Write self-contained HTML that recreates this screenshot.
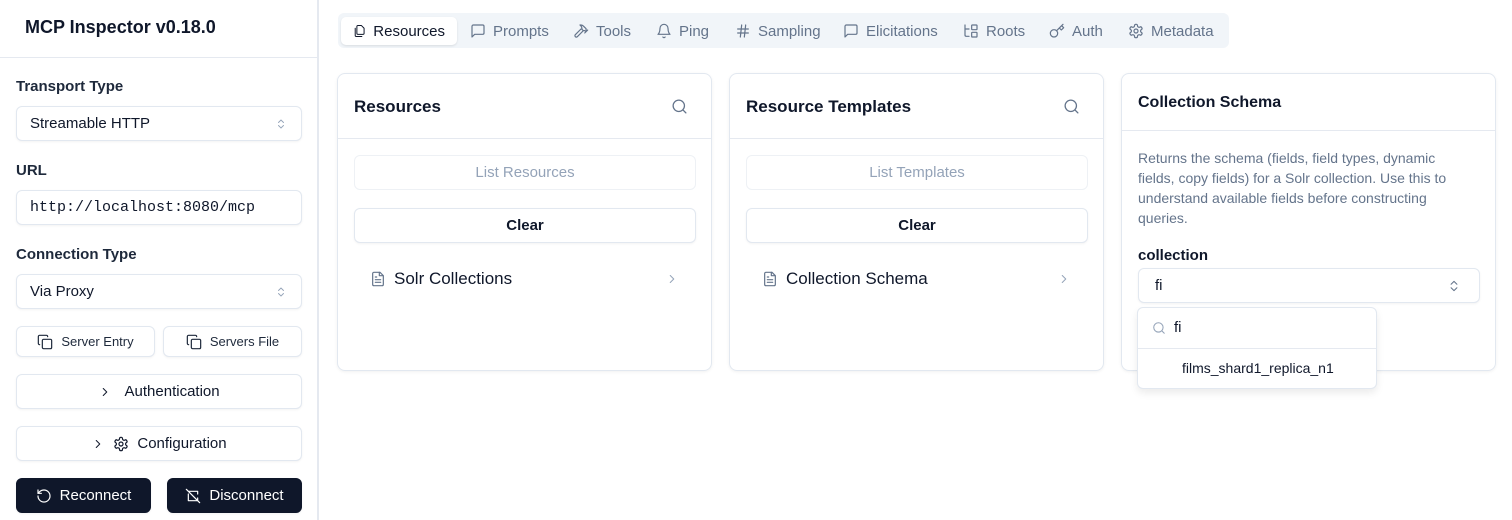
<!DOCTYPE html>
<html><head><style>
*{box-sizing:border-box;margin:0;padding:0}
body{width:1512px;height:520px;overflow:hidden;background:#fff;font-family:"Liberation Sans",sans-serif;color:#0f172a;position:relative}
.abs{position:absolute}
.side{left:0;top:0;width:319px;height:520px;border-right:2px solid #e5e9f0}
.title{left:25px;top:17px;font-size:18px;font-weight:bold}
.hr{left:0;top:57px;width:318px;height:1px;background:#e5e9f0}
.lbl{font-size:15px;font-weight:bold;color:#1e293b;left:16px}
.box{border:1px solid #e2e8f0;border-radius:6px;background:#fff;box-shadow:0 1px 2px rgba(0,0,0,.05);display:flex;align-items:center;font-size:15px}
.btn{justify-content:center;font-weight:bold;font-size:14px;gap:8px}
.dark{background:#0f172a;color:#fff;border-color:#0f172a;font-size:15px}
.tabs{left:338px;top:13px;width:891px;height:35px;background:#f1f5f9;border-radius:6px}
.tab{position:absolute;top:4px;height:28px;display:flex;align-items:center;gap:7px;font-size:15px;color:#64748b}
.tab.on{background:#fff;color:#0f172a;border-radius:5px;box-shadow:0 1px 2px rgba(0,0,0,.1);padding:0 12px}
.card{top:73px;width:375px;height:298px;border:1px solid #e2e8f0;border-radius:8px;box-shadow:0 1px 3px rgba(0,0,0,.06)}
.ch{position:absolute;left:16px;font-size:17px;font-weight:bold}
svg{fill:none;stroke:currentColor;stroke-width:1.8;stroke-linecap:round;stroke-linejoin:round}
</style></head><body>
<svg width="0" height="0" style="position:absolute"><defs><g id="gear"><path d="M12.22 2h-.44a2 2 0 0 0-2 2v.18a2 2 0 0 1-1 1.73l-.43.25a2 2 0 0 1-2 0l-.15-.08a2 2 0 0 0-2.73.73l-.22.38a2 2 0 0 0 .73 2.73l.15.1a2 2 0 0 1 1 1.72v.51a2 2 0 0 1-1 1.74l-.15.09a2 2 0 0 0-.73 2.73l.22.38a2 2 0 0 0 2.73.73l.15-.08a2 2 0 0 1 2 0l.43.25a2 2 0 0 1 1 1.73V20a2 2 0 0 0 2 2h.44a2 2 0 0 0 2-2v-.18a2 2 0 0 1 1-1.73l.43-.25a2 2 0 0 1 2 0l.15.08a2 2 0 0 0 2.73-.73l.22-.39a2 2 0 0 0-.73-2.73l-.15-.08a2 2 0 0 1-1-1.74v-.5a2 2 0 0 1 1-1.74l.15-.09a2 2 0 0 0 .73-2.73l-.22-.38a2 2 0 0 0-2.73-.73l-.15.08a2 2 0 0 1-2 0l-.43-.25a2 2 0 0 1-1-1.73V4a2 2 0 0 0-2-2z"/><circle cx="12" cy="12" r="3"/></g></defs></svg>
<div class="abs side"></div>
<div class="abs title">MCP Inspector v0.18.0</div>
<div class="abs hr"></div>
<div class="abs lbl" style="top:78px">Transport Type</div>
<div class="abs box" style="left:16px;top:106px;width:286px;height:35px;padding-left:13px">Streamable HTTP<svg class="abs" style="right:14px;top:10px;color:#94a3b8" width="12" height="14" viewBox="0 0 24 24"><path d="m7 15 5 5 5-5M7 9l5-5 5 5"/></svg></div>
<div class="abs lbl" style="top:162px">URL</div>
<div class="abs box" style="left:16px;top:190px;width:286px;height:35px;padding-left:13px;font-family:'Liberation Mono',monospace;font-size:15px">http://localhost:8080/mcp</div>
<div class="abs lbl" style="top:246px">Connection Type</div>
<div class="abs box" style="left:16px;top:274px;width:286px;height:35px;padding-left:13px">Via Proxy<svg class="abs" style="right:14px;top:10px;color:#94a3b8" width="12" height="14" viewBox="0 0 24 24"><path d="m7 15 5 5 5-5M7 9l5-5 5 5"/></svg></div>
<div class="abs box btn" style="left:16px;top:326px;width:139px;height:31px;font-weight:normal;color:#1e293b;font-size:13px"><svg width="16" height="16" viewBox="0 0 24 24"><rect x="8" y="8" width="14" height="14" rx="2"/><path d="M4 16c-1.1 0-2-.9-2-2V4c0-1.1.9-2 2-2h10c1.1 0 2 .9 2 2"/></svg>Server Entry</div>
<div class="abs box btn" style="left:163px;top:326px;width:139px;height:31px;font-weight:normal;color:#1e293b;font-size:13px"><svg width="16" height="16" viewBox="0 0 24 24"><rect x="8" y="8" width="14" height="14" rx="2"/><path d="M4 16c-1.1 0-2-.9-2-2V4c0-1.1.9-2 2-2h10c1.1 0 2 .9 2 2"/></svg>Servers File</div>
<div class="abs box btn" style="left:16px;top:374px;width:286px;height:35px;font-weight:normal;font-size:15px"><svg width="14" height="14" viewBox="0 0 24 24"><path d="m9 18 6-6-6-6"/></svg>&nbsp;Authentication</div>
<div class="abs box btn" style="left:16px;top:426px;width:286px;height:35px;font-weight:normal;font-size:15px"><svg width="14" height="14" viewBox="0 0 24 24"><path d="m9 18 6-6-6-6"/></svg><svg width="16" height="16" viewBox="0 0 24 24"><use href="#gear"/></svg>Configuration</div>
<div class="abs box btn dark" style="left:16px;top:478px;width:135px;height:35px;font-weight:normal"><svg width="16" height="16" viewBox="0 0 24 24"><path d="M3 12a9 9 0 1 0 9-9 9.75 9.75 0 0 0-6.74 2.74L3 8"/><path d="M3 3v5h5"/></svg>Reconnect</div>
<div class="abs box btn dark" style="left:167px;top:478px;width:135px;height:35px;font-weight:normal"><svg width="16" height="16" viewBox="0 0 24 24"><path d="M2 2l20 20M5 5h14v4M19 15v4H5V9"/></svg>Disconnect</div>

<div class="abs tabs">
<div class="tab on" style="left:3px;width:116px"><svg width="16" height="16" viewBox="0 0 24 24"><path d="M15 2H9a2 2 0 0 0-2 2v12a2 2 0 0 0 2 2h9a2 2 0 0 0 2-2V7z"/><path d="M4 7v13a2 2 0 0 0 2 2h10"/></svg>Resources</div>
<div class="tab" style="left:132px"><svg width="16" height="16" viewBox="0 0 24 24"><path d="M21 15a2 2 0 0 1-2 2H7l-4 4V5a2 2 0 0 1 2-2h14a2 2 0 0 1 2 2z"/></svg>Prompts</div>
<div class="tab" style="left:235px"><svg width="16" height="16" viewBox="0 0 24 24"><path d="m15 12-8.5 8.5a2.1 2.1 0 0 1-3-3L12 9M17.6 15 22 10.6M20.9 11.7l-1.3-1.3V8.6l-4-4A6 6 0 0 0 11 3h-.5l.9.8A6 6 0 0 1 13.4 8v1.4l2 2h2.3l1.3 1.3"/></svg>Tools</div>
<div class="tab" style="left:318px"><svg width="16" height="16" viewBox="0 0 24 24"><path d="M6 8a6 6 0 0 1 12 0c0 7 3 9 3 9H3s3-2 3-9M10.3 21a1.9 1.9 0 0 0 3.4 0"/></svg>Ping</div>
<div class="tab" style="left:397px"><svg width="16" height="16" viewBox="0 0 24 24"><path d="M4 9h16M4 15h16M10 3 8 21M16 3l-2 18"/></svg>Sampling</div>
<div class="tab" style="left:505px"><svg width="16" height="16" viewBox="0 0 24 24"><path d="M21 15a2 2 0 0 1-2 2H7l-4 4V5a2 2 0 0 1 2-2h14a2 2 0 0 1 2 2z"/></svg>Elicitations</div>
<div class="tab" style="left:625px"><svg width="16" height="16" viewBox="0 0 24 24"><path d="M3 3v15a2 2 0 0 0 2 2h4M3 9h6"/><rect x="13" y="3" width="8" height="7" rx="1"/><rect x="13" y="14" width="8" height="7" rx="1"/></svg>Roots</div>
<div class="tab" style="left:711px"><svg width="16" height="16" viewBox="0 0 24 24"><circle cx="7.5" cy="15.5" r="5.5"/><path d="m21 2-9.6 9.6M15.5 7.5l3 3L22 7l-3-3"/></svg>Auth</div>
<div class="tab" style="left:790px"><svg width="16" height="16" viewBox="0 0 24 24"><use href="#gear"/></svg>Metadata</div>
</div>

<div class="abs card" style="left:337px">
 <div class="ch" style="top:23px">Resources</div>
 <svg class="abs" style="left:333px;top:24px;color:#64748b" width="17" height="17" viewBox="0 0 24 24"><circle cx="11" cy="11" r="8"/><path d="m21 21-4.3-4.3"/></svg>
 <div class="abs" style="left:0;top:64px;width:373px;height:1px;background:#e5e9f0"></div>
 <div class="abs box btn" style="left:16px;top:81px;width:342px;height:35px;color:#94a3b8;font-weight:normal;font-size:15px;box-shadow:none;border-color:#eef1f5">List Resources</div>
 <div class="abs box btn" style="left:16px;top:134px;width:342px;height:35px;font-size:15px">Clear</div>
 <svg class="abs" style="left:32px;top:197px;color:#64748b" width="16" height="16" viewBox="0 0 24 24"><path d="M15 2H6a2 2 0 0 0-2 2v16a2 2 0 0 0 2 2h12a2 2 0 0 0 2-2V7z"/><path d="M14 2v5h5M16 13H8M16 17H8M10 9H8"/></svg>
 <div class="abs" style="left:56px;top:195px;font-size:17px">Solr Collections</div>
 <svg class="abs" style="left:327px;top:198px;color:#94a3b8" width="14" height="14" viewBox="0 0 24 24"><path d="m9 18 6-6-6-6"/></svg>
</div>
<div class="abs card" style="left:729px">
 <div class="ch" style="top:23px">Resource Templates</div>
 <svg class="abs" style="left:333px;top:24px;color:#64748b" width="17" height="17" viewBox="0 0 24 24"><circle cx="11" cy="11" r="8"/><path d="m21 21-4.3-4.3"/></svg>
 <div class="abs" style="left:0;top:64px;width:373px;height:1px;background:#e5e9f0"></div>
 <div class="abs box btn" style="left:16px;top:81px;width:342px;height:35px;color:#94a3b8;font-weight:normal;font-size:15px;box-shadow:none;border-color:#eef1f5">List Templates</div>
 <div class="abs box btn" style="left:16px;top:134px;width:342px;height:35px;font-size:15px">Clear</div>
 <svg class="abs" style="left:32px;top:197px;color:#64748b" width="16" height="16" viewBox="0 0 24 24"><path d="M15 2H6a2 2 0 0 0-2 2v16a2 2 0 0 0 2 2h12a2 2 0 0 0 2-2V7z"/><path d="M14 2v5h5M16 13H8M16 17H8M10 9H8"/></svg>
 <div class="abs" style="left:56px;top:195px;font-size:17px">Collection Schema</div>
 <svg class="abs" style="left:327px;top:198px;color:#94a3b8" width="14" height="14" viewBox="0 0 24 24"><path d="m9 18 6-6-6-6"/></svg>
</div>
<div class="abs card" style="left:1121px">
 <div class="ch" style="top:20px;font-size:16px">Collection Schema</div>
 <div class="abs" style="left:0;top:56px;width:373px;height:1px;background:#e5e9f0"></div>
 <div class="abs" style="left:16px;top:74px;width:320px;font-size:14px;line-height:20px;color:#64748b">Returns the schema (fields, field types, dynamic fields, copy fields) for a Solr collection. Use this to understand available fields before constructing queries.</div>
 <div class="abs" style="left:16px;top:173px;font-size:15px;font-weight:bold">collection</div>
 <div class="abs box" style="left:16px;top:194px;width:342px;height:35px;padding-left:16px;font-size:15px">fi<svg class="abs" style="right:18px;top:9px;color:#64748b" width="14" height="16" viewBox="0 0 24 24"><path d="m7 15 5 5 5-5M7 9l5-5 5 5"/></svg></div>
</div>
<div class="abs" style="left:1137px;top:307px;width:240px;height:82px;background:#fff;border:1px solid #e2e8f0;border-radius:6px;box-shadow:0 4px 8px rgba(0,0,0,.08)">
 <svg class="abs" style="left:14px;top:13px;color:#94a3b8" width="14" height="14" viewBox="0 0 24 24"><circle cx="11" cy="11" r="8"/><path d="m21 21-4.3-4.3"/></svg>
 <div class="abs" style="left:36px;top:11px;font-size:15px">fi</div>
 <div class="abs" style="left:0;top:40px;width:238px;height:1px;background:#e5e9f0"></div>
 <div class="abs" style="left:44px;top:52px;font-size:14px">films_shard1_replica_n1</div>
</div>
</body></html>
